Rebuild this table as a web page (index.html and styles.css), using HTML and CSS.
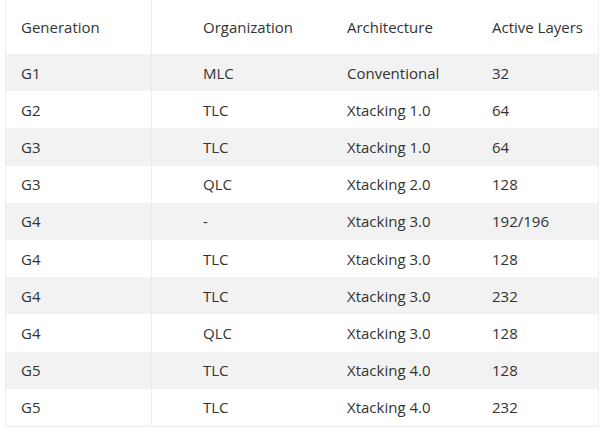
FILE: index.html
```html
<!DOCTYPE html>
<html>
<head>
<meta charset="utf-8">
<link rel="stylesheet" href="styles.css">
</head>
<body>
<div class="wrap">
  <table class="spec">
    <thead>
      <tr><th>Generation</th><th>Organization</th><th>Architecture</th><th>Active Layers</th></tr>
    </thead>
    <tbody>
      <tr><td>G1</td><td>MLC</td><td>Conventional</td><td>32</td></tr>
      <tr><td>G2</td><td>TLC</td><td>Xtacking 1.0</td><td>64</td></tr>
      <tr><td>G3</td><td>TLC</td><td>Xtacking 1.0</td><td>64</td></tr>
      <tr><td>G3</td><td>QLC</td><td>Xtacking 2.0</td><td>128</td></tr>
      <tr><td>G4</td><td>-</td><td>Xtacking 3.0</td><td>192/196</td></tr>
      <tr><td>G4</td><td>TLC</td><td>Xtacking 3.0</td><td>128</td></tr>
      <tr><td>G4</td><td>TLC</td><td>Xtacking 3.0</td><td>232</td></tr>
      <tr><td>G4</td><td>QLC</td><td>Xtacking 3.0</td><td>128</td></tr>
      <tr><td>G5</td><td>TLC</td><td>Xtacking 4.0</td><td>128</td></tr>
      <tr><td>G5</td><td>TLC</td><td>Xtacking 4.0</td><td>232</td></tr>
    </tbody>
  </table>
</div>
</body>
</html>
```
FILE: styles.css
```css
html, body {
  margin: 0;
  padding: 0;
  background: #fff;
}
.wrap {
  padding-left: 5px;
  width: 594px;
  position: relative;
}
.wrap::after {
  content: "";
  position: absolute;
  left: 151px;
  top: 0;
  width: 1px;
  height: 425px;
  background: #ececec;
}
.spec {
  width: 594px;
  border-collapse: collapse;
  table-layout: fixed;
  font-family: "Open Sans", sans-serif;
  font-size: 15px;
  line-height: 20px;
  color: #333;
  border-left: 1px solid #eee;
  border-right: 1px solid #eee;
  border-bottom: 1px solid #eee;
}
.spec th, .spec td {
  text-align: left;
  font-weight: normal;
  padding: 0 0 0 15px;
  vertical-align: middle;
}
.spec th {
  height: 53px;
  padding-bottom: 1px;
}
.spec td {
  height: 37.2px;
}
.spec th:nth-child(1) { width: 167px; }
.spec th:nth-child(2) { width: 129px; }
.spec th:nth-child(3) { width: 130px; }
.spec tbody tr:nth-child(odd) td {
  background: #f2f2f2;
}
```
